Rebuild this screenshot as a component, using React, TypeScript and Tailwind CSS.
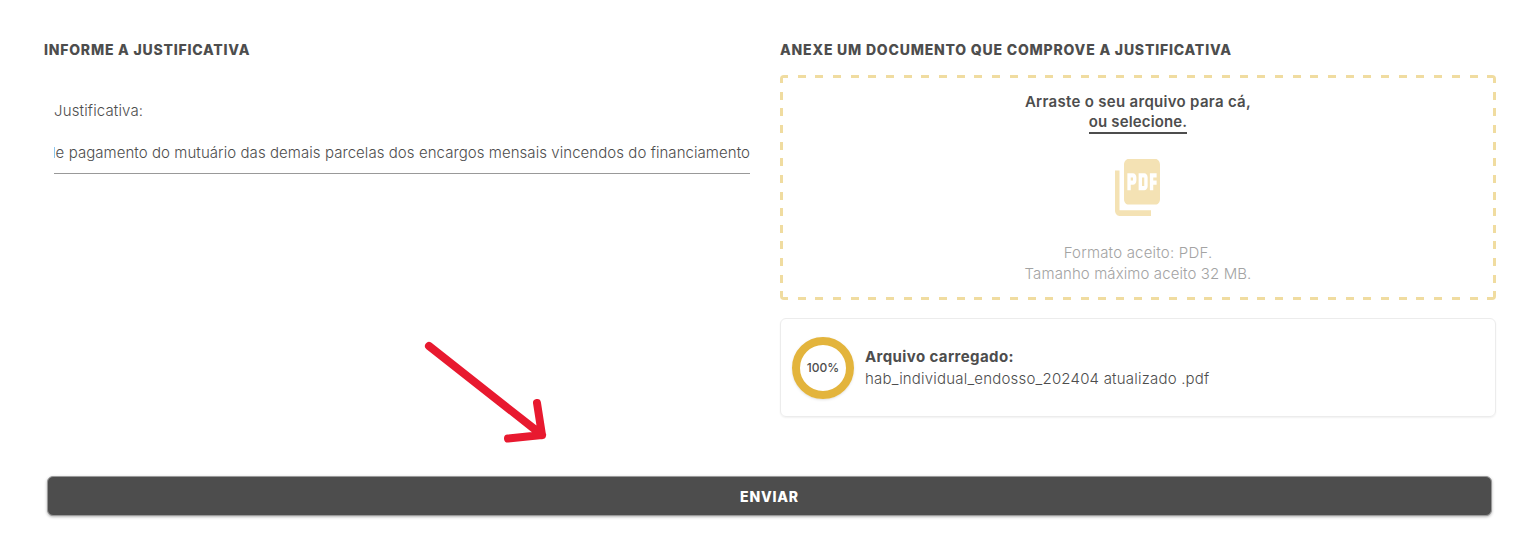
import { MdPictureAsPdf } from 'react-icons/md';

export default function App() {
  return (
    <div className="relative h-[552px] w-[1532px] overflow-hidden bg-white font-['Inter',sans-serif] text-[#4d4d4d]">
      <div className="flex pl-[44px] pr-[36px] pt-[42px]">
        <div className="w-[706px] shrink-0">
          <h2 className="text-[14px] font-extrabold leading-4 tracking-[0.78px]">INFORME A JUSTIFICATIVA</h2>
          <div className="ml-[10px] mt-[43px]">
            <label className="block text-[15px] font-light leading-5 tracking-[0.15px]">Justificativa:</label>
            <div className="mt-[22px] flex h-[31px] justify-end overflow-hidden whitespace-nowrap border-b border-[#999] text-[15px] font-light leading-5 tracking-[0.06px]">
              <span className="shrink-0">de pagamento do mutuário das demais parcelas dos encargos mensais vincendos do financiamento</span>
            </div>
          </div>
        </div>

        <div className="ml-[30px] w-[716px] shrink-0">
          <h2 className="text-[14px] font-extrabold leading-4 tracking-[0.8px]">ANEXE UM DOCUMENTO QUE COMPROVE A JUSTIFICATIVA</h2>
          <div className="mt-[17px] flex h-[225px] flex-col items-center rounded-[4px] bg-[repeating-linear-gradient(90deg,#f0dca0_0_8px,transparent_8px_17.68px),repeating-linear-gradient(90deg,#f0dca0_0_8px,transparent_8px_17.68px),repeating-linear-gradient(180deg,#f0dca0_0_8px,transparent_8px_16.65px),repeating-linear-gradient(180deg,#f0dca0_0_8px,transparent_8px_16.65px)] bg-[length:100%_3px,100%_3px,3px_100%,3px_100%] bg-[position:0_0,0_100%,0_0,100%_0] bg-no-repeat pt-[16px]">
            <p className="text-[15px] font-semibold leading-[21px] tracking-[0.3px]">Arraste o seu arquivo para cá,</p>
            <p className="border-b-2 border-[#4d4d4d] text-[15px] font-semibold leading-[20px] tracking-[0.15px]">ou selecione.</p>
            <MdPictureAsPdf
              viewBox="2 2 20 20"
              preserveAspectRatio="none"
              className="mr-[1px] mt-[25px] h-[57px] w-[45px] text-[#f4e2b4]"
            />
            <p className="mt-[26px] text-[15px] font-light leading-[21px] tracking-[0.2px] text-[#a3a3a3]">Formato aceito: PDF.</p>
            <p className="text-[15px] font-light leading-[21px] tracking-[0.1px] text-[#a3a3a3]">Tamanho máximo aceito 32 MB.</p>
          </div>
          <div className="mt-[18px] flex h-[99px] items-center rounded-md border border-[#ececec] pl-[11px] shadow-[0_1px_2px_rgba(0,0,0,0.06)]">
            <div className="flex h-[62px] w-[62px] items-center justify-center rounded-full border-[8px] border-[#e3b43c] text-[12px] font-medium shadow-sm">
              100%
            </div>
            <div className="ml-[11px]">
              <p className="text-[15px] font-bold leading-[21px] tracking-[0.4px]">Arquivo carregado:</p>
              <p className="mt-[1px] text-[15px] font-light leading-[22px] tracking-[0.2px]">hab_individual_endosso_202404 atualizado .pdf</p>
            </div>
          </div>
        </div>
      </div>

      <div className="ml-[47px] mt-[59px] flex h-[40px] w-[1445px] items-center justify-center rounded-md border border-[#999] bg-[#4d4d4d] text-[14px] font-extrabold tracking-[0.78px] text-white shadow-[0_1px_3px_rgba(0,0,0,0.3)]">
        ENVIAR
      </div>

      <svg className="absolute left-[410px] top-[330px]" width="150" height="120" viewBox="0 0 150 120" fill="none">
        <path
          d="M19 16 L132 105 M127 73 L132 105 L98 108.500"
          stroke="#e8192f"
          strokeWidth="8"
          strokeLinecap="round"
          strokeLinejoin="round"
        />
      </svg>
    </div>
  );
}
